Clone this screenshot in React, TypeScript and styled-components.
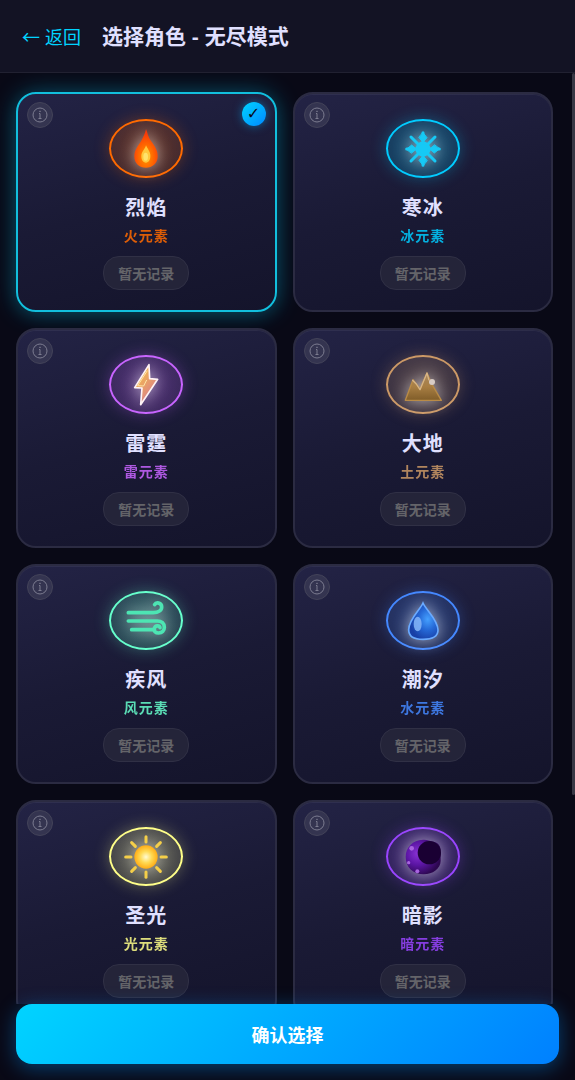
import React, { useState } from "react";
import styled, { createGlobalStyle } from "styled-components";

const GlobalStyle = createGlobalStyle`
  *, *::before, *::after { box-sizing: border-box; }
  body {
    margin: 0;
    background: #090916;
    color: #e0e0ff;
    font-family: "Noto Sans CJK SC", "Noto Sans", sans-serif;
  }
  button { font-family: inherit; cursor: pointer; }
`;

const Screen = styled.div`
  display: flex;
  flex-direction: column;
  height: 100vh;
  overflow: hidden;
`;

const Header = styled.header`
  display: flex;
  align-items: center;
  gap: 21px;
  height: 73px;
  flex: none;
  padding: 2px 22px 0;
  background: #131324;
  border-bottom: 1px solid #212131;
  font-family: "Liberation Sans", "Noto Sans CJK SC", sans-serif;
`;

const BackButton = styled.button`
  padding: 0;
  border: 0;
  background: none;
  color: #00d4ff;
  font-size: 18px;
  line-height: 28px;
`;

const Arrow = styled.span`
  font-family: "Noto Sans CJK SC", sans-serif;
`;

const Title = styled.h1`
  margin: 0;
  font-size: 21px;
  line-height: 30px;
  font-weight: 700;
`;

const ScrollArea = styled.main`
  display: flex;
  align-items: flex-start;
  flex: 1;
  min-height: 0;
  overflow: hidden;
`;

const Grid = styled.div`
  flex: 1;
  display: grid;
  grid-template-columns: 1fr 1fr;
  gap: 16px;
  padding: 19px 19px 19px 16px;
`;

const ScrollThumb = styled.div`
  width: 3px;
  height: 77.5%;
  border-radius: 2px;
  background: #383845;
`;

const Card = styled.div<{ $selected: boolean }>`
  position: relative;
  border: 2px solid ${(p) => (p.$selected ? "#12bfdd" : "#2b2b42")};
  border-radius: 20px;
  background: linear-gradient(165deg, #232345 0%, #1a1a35 50%, #14142b 100%);
  box-shadow: ${(p) =>
    p.$selected
      ? "0 0 24px rgba(0, 212, 255, 0.3), 0 4px 18px rgba(0, 212, 255, 0.1)"
      : "inset 0 1px 0 rgba(255, 255, 255, 0.06)"};
`;

const CardLabel = styled.label`
  display: flex;
  flex-direction: column;
  align-items: center;
  padding: 25px 0 20px;
  cursor: pointer;
`;

const HiddenRadio = styled.input`
  position: absolute;
  opacity: 0;
  pointer-events: none;
`;

const InfoButton = styled.button`
  position: absolute;
  top: 8px;
  left: 9px;
  display: grid;
  place-items: center;
  width: 26px;
  height: 26px;
  padding: 0;
  border: 1px solid #434359;
  border-radius: 50%;
  background: #343450;
  color: #7c7c90;
`;

const CheckBadge = styled.span`
  position: absolute;
  top: 8px;
  right: 9px;
  display: grid;
  place-items: center;
  width: 24px;
  height: 24px;
  border-radius: 50%;
  background: linear-gradient(135deg, #00d4ff, #0088ff);
  box-shadow: 0 0 10px rgba(0, 180, 255, 0.5);
  color: #0a0a1a;
  font-family: "DejaVu Sans", sans-serif;
  font-size: 16px;
  line-height: 24px;
  font-weight: 700;
`;

const Portrait = styled.span<{ $color: string }>`
  display: grid;
  place-items: center;
  width: 74px;
  height: 59px;
  border: 2px solid ${(p) => p.$color};
  border-radius: 50%;
  background: radial-gradient(circle, ${(p) => p.$color}55 0%, ${(p) => p.$color}30 75%);
  box-shadow: 0 0 16px ${(p) => p.$color}4d;
`;

const IconSvg = styled.svg`
  width: 48px;
  height: 48px;
  overflow: visible;
  filter: drop-shadow(0 0 8px rgba(255, 255, 255, 0.6));
`;

const Name = styled.span`
  margin-top: 15px;
  font-size: 20px;
  line-height: 28px;
  font-weight: 700;
  letter-spacing: 1px;
`;

const ElementName = styled.span<{ $color: string }>`
  margin-top: 4px;
  color: ${(p) => p.$color};
  font-size: 14px;
  line-height: 20px;
  font-weight: 700;
  letter-spacing: 1px;
  opacity: 0.85;
`;

const RecordPill = styled.span`
  margin-top: 11px;
  padding: 6px 14px;
  border: 1px solid #303045;
  border-radius: 16px;
  background: #242439;
  color: #646469;
  font-size: 14px;
  line-height: 20px;
  font-weight: 700;
`;

const Footer = styled.footer`
  position: relative;
  flex: none;
  padding: 0 16px 16px;
`;

const ConfirmButton = styled.button`
  width: 100%;
  height: 60px;
  border: 0;
  border-radius: 16px;
  background: linear-gradient(135deg, #00d4ff, #0080ff);
  box-shadow: 0 4px 20px rgba(0, 150, 255, 0.4);
  color: #ffffff;
  font-size: 18px;
  font-weight: 700;
`;

const Fire = () => (
  <>
    <defs>
      <radialGradient id="fire" cx="50%" cy="72%" r="60%">
        <stop offset="0" stopColor="#ff9800" />
        <stop offset="0.5" stopColor="#ff6a00" />
        <stop offset="1" stopColor="#f73a08" />
      </radialGradient>
    </defs>
    <path fill="url(#fire)" d="M72 12C77 24 78 36 87 48C98 63 108 77 107 96C106 116 91 128 72 128C52 128 37 114 37 95C37 72 51 61 59 45C64 35 70 25 72 12Z" />
    <path fill="#ffc83d" d="M72 61C76 72 86 80 85 94C85 105 80 113 72 113C63 113 58 105 58 94C58 80 69 73 72 61Z" />
    <ellipse cx="71" cy="95" rx="7" ry="12" fill="#ffe36c" />
  </>
);

const Snow = () => (
  <g stroke="#16c9f5" fill="#16c9f5" strokeLinecap="round" strokeWidth="9">
    {[0, 90, 180, 270].map((a) => (
      <g key={a} transform={`rotate(${a} 72 72)`}>
        <path d="M72 72V23M72 72L108 36" />
        <path strokeWidth="3" d="M72 23L84 38L72 52L60 38Z" />
      </g>
    ))}
    <circle cx="72" cy="72" r="18" />
  </g>
);

const Bolt = () => (
  <>
    <defs>
      <linearGradient id="bolt" x1="0" y1="0" x2="0.7" y2="1">
        <stop offset="0.2" stopColor="#f5bd4b" />
        <stop offset="0.7" stopColor="#e29078" />
        <stop offset="1" stopColor="#c779b4" />
      </linearGradient>
    </defs>
    <path fill="url(#bolt)" stroke="#fff3f5" strokeWidth="5" strokeLinejoin="round" d="M81 11L38 80L60 81L56 131L107 55L83 53Z" />
    <path fill="none" stroke="#ffe7a8" strokeWidth="3" d="M76 29L47 74L65 75L74 57" />
  </>
);

const Mountain = () => (
  <>
    <defs>
      <linearGradient id="mountain" x1="0" y1="0" x2="0" y2="1">
        <stop offset="0" stopColor="#a88860" />
        <stop offset="0.5" stopColor="#a87e43" />
        <stop offset="1" stopColor="#805d29" />
      </linearGradient>
    </defs>
    <path fill="url(#mountain)" stroke="#b98b47" strokeWidth="4" strokeLinejoin="round" d="M19 118L42 56L63 84L84 36L99 70L127 118Z" />
    <path fill="none" stroke="#d6b588" strokeWidth="4" strokeLinejoin="round" d="M40 57L52 69L63 86L84 36L90 58" />
    <circle cx="99" cy="63" r="9" fill="#d8ccc5" />
  </>
);

const Wind = () => (
  <g fill="none" stroke="#4de5b3" strokeWidth="11" strokeLinecap="round" strokeLinejoin="round">
    <path d="M19 47H94C109 47 119 40 119 30C119 16 102 15 98 23" />
    <path d="M19 72H106C119 72 127 79 127 91C127 102 120 108 110 108C100 108 95 102 97 94C100 85 112 84 114 92" />
    <path d="M29 98H97" />
  </g>
);

const Drop = () => (
  <>
    <defs>
      <radialGradient id="drop" cx="65%" cy="45%" r="60%">
        <stop offset="0" stopColor="#45a0ff" />
        <stop offset="0.5" stopColor="#2568d6" />
        <stop offset="1" stopColor="#183fa6" />
      </radialGradient>
    </defs>
    <path fill="url(#drop)" stroke="#6aaaff" strokeWidth="5" d="M72 18C81 39 117 68 117 99C117 119 100 127 72 127C45 127 29 118 29 98C29 67 63 39 72 18Z" />
    <ellipse cx="56" cy="81" rx="12" ry="22" fill="#86b6f8" opacity="0.85" />
  </>
);

const Sun = () => (
  <>
    <defs>
      <radialGradient id="sun">
        <stop offset="0" stopColor="#fffbd3" />
        <stop offset="0.5" stopColor="#ffda53" />
        <stop offset="1" stopColor="#ffad16" />
      </radialGradient>
    </defs>
    <circle cx="72" cy="72" r="35" fill="url(#sun)" />
    <g stroke="#f5cf49" strokeWidth="9" strokeLinecap="round">
      {[0, 45, 90, 135, 180, 225, 270, 315].map((a) => (
        <path key={a} d="M72 27V11" transform={`rotate(${a} 72 72)`} />
      ))}
    </g>
  </>
);

const Moon = () => (
  <>
    <defs>
      <radialGradient id="moon" cx="35%" cy="40%" r="65%">
        <stop offset="0" stopColor="#8a32d6" />
        <stop offset="0.5" stopColor="#5c16a5" />
        <stop offset="1" stopColor="#2c074f" />
      </radialGradient>
    </defs>
    <path fill="url(#moon)" d="M72 20C85 19 96 25 106 27C120 31 125 41 125 55V84C125 107 101 124 74 124C42 124 20 102 20 72C20 43 41 21 72 20Z" />
    <circle cx="91" cy="59" r="35" fill="#1a0033" />
    <g fill="#a863df">
      <circle cx="38" cy="46" r="7" />
      <circle cx="29" cy="89" r="5" />
      <circle cx="55" cy="115" r="6" />
    </g>
  </>
);

const characters = [
  { name: "烈焰", element: "火元素", color: "#ff6a00", Icon: Fire },
  { name: "寒冰", element: "冰元素", color: "#00ccff", Icon: Snow },
  { name: "雷霆", element: "雷元素", color: "#c864ff", Icon: Bolt },
  { name: "大地", element: "土元素", color: "#cc9966", Icon: Mountain },
  { name: "疾风", element: "风元素", color: "#66ffcc", Icon: Wind },
  { name: "潮汐", element: "水元素", color: "#4488ff", Icon: Drop },
  { name: "圣光", element: "光元素", color: "#ffff88", Icon: Sun },
  { name: "暗影", element: "暗元素", color: "#9944ff", Icon: Moon },
];

export default function App() {
  const [selected, setSelected] = useState(0);
  return (
    <Screen>
      <GlobalStyle />
      <Header>
        <BackButton type="button">
          <Arrow>←</Arrow> 返回
        </BackButton>
        <Title>选择角色 - 无尽模式</Title>
      </Header>
      <ScrollArea>
        <Grid>
          {characters.map(({ name, element, color, Icon }, i) => (
            <Card key={name} $selected={i === selected}>
              <CardLabel>
                <HiddenRadio
                  type="radio"
                  name="character"
                  checked={i === selected}
                  onChange={() => setSelected(i)}
                />
                <Portrait $color={color}>
                  <IconSvg viewBox="0 0 144 144" aria-hidden="true">
                    <Icon />
                  </IconSvg>
                </Portrait>
                <Name>{name}</Name>
                <ElementName $color={color}>{element}</ElementName>
                <RecordPill>暂无记录</RecordPill>
              </CardLabel>
              <InfoButton type="button" aria-label={`${name}详情`}>
                <svg width="16" height="16" viewBox="0 0 16 16" fill="none" stroke="currentColor" aria-hidden="true">
                  <circle cx="8" cy="8" r="7" />
                  <path d="M7 6.5H8V11.5M6.5 11.5H9.5" />
                  <circle cx="8" cy="4.3" r="0.4" />
                </svg>
              </InfoButton>
              {i === selected && <CheckBadge>✓</CheckBadge>}
            </Card>
          ))}
        </Grid>
        <ScrollThumb />
      </ScrollArea>
      <Footer>
        <ConfirmButton type="button">确认选择</ConfirmButton>
      </Footer>
    </Screen>
  );
}
